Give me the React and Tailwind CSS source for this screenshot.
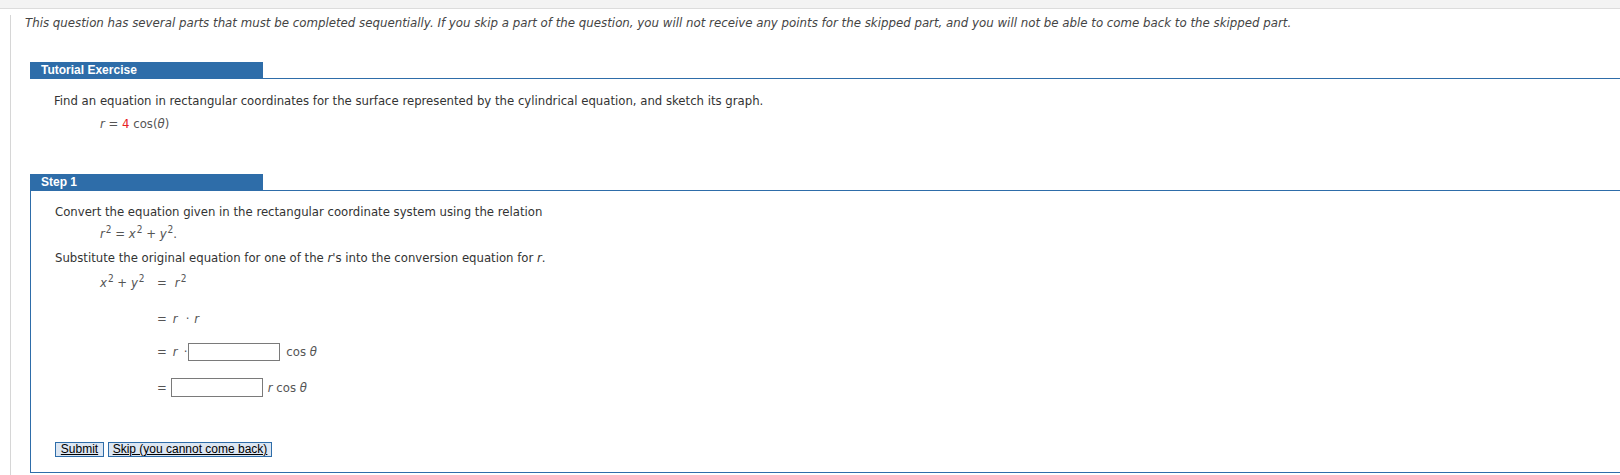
import React from "react";

const BLUE = "bg-[#2e6da9]";

const SectionHeader = ({ title }) => (
  <div className="flex items-end">
    <div className={`w-[233px] h-[17px] ${BLUE} pl-[11px] text-white font-bold text-[12px] leading-[17px] font-['Liberation_Sans',Arial,sans-serif]`}>
      {title}
    </div>
    <div className="flex-1 border-b border-[#2e6da9]" />
  </div>
);

const V = ({ children }) => <i className="italic">{children}</i>;
const Sq = () => <sup className="text-[10px] ml-[1px]">2</sup>;

export default function App() {
  return (
    <div className="w-[1620px] h-[475px] bg-white overflow-hidden text-[#333] font-['DejaVu_Sans_Condensed','DejaVu_Sans',sans-serif] text-[13px]">
      <div className="h-[9px] bg-[#f3f3f3] border-b border-[#dcdcdc]" />
      <div className="ml-[10px] border-l border-[#d6d6d6] h-[466px]">
        <p className="mt-[6px] pl-[14px] leading-[16px] italic text-[11.8px] text-[#444] font-['DejaVu_Sans',sans-serif]">
          This question has several parts that must be completed sequentially. If you skip a part of the question, you will not receive any points for the skipped part, and you will not be able to come back to the skipped part.
        </p>

        <div className="ml-[19px] mt-[31px]">
          <SectionHeader title="Tutorial Exercise" />
          <div className="pl-[24px]">
            <p className="mt-[14px] leading-[16px]">
              Find an equation in rectangular coordinates for the surface represented by the cylindrical equation, and sketch its graph.
            </p>
            <p className="mt-[7px] ml-[46px] leading-[16px] text-[#555]">
              <V>r</V> = <span className="text-[#e8231f]">4</span> cos(<V>θ</V>)
            </p>
          </div>
        </div>

        <div className="ml-[19px] mt-[42px]">
          <SectionHeader title="Step 1" />
          <div className="border-l border-b border-[#2e6da9] pl-[24px] pb-[15px]">
            <p className="pt-[13px] leading-[16px]">
              Convert the equation given in the rectangular coordinate system using the relation
            </p>
            <p className="mt-[6px] ml-[45px] leading-[16px] text-[#555]">
              <V>r</V><Sq /> = <V>x</V><Sq /> + <V>y</V><Sq />.
            </p>
            <p className="mt-[8px] leading-[16px]">
              Substitute the original equation for one of the <V>r</V>'s into the conversion equation for <V>r</V>.
            </p>

            <div className="ml-[45px] grid grid-cols-[57px_auto] justify-start text-[#555]">
              <div className="mt-[9px] leading-[16px]">
                <V>x</V><Sq /> + <V>y</V><Sq />
              </div>
              <div className="mt-[9px] leading-[16px]">
                <span>=</span>
                <span className="ml-[8px]"><V>r</V><Sq /></span>
              </div>

              <div />
              <div className="mt-[20px] leading-[16px] flex">
                <span>=</span>
                <span className="ml-[6px]"><V>r</V></span>
                <span className="ml-[8px]">·</span>
                <span className="ml-[5px]"><V>r</V></span>
              </div>

              <div />
              <div className="mt-[16px] h-[18px] flex items-center">
                <span>=</span>
                <span className="ml-[6px]"><V>r</V></span>
                <span className="ml-[6px]">·</span>
                <input type="text" className="ml-[1px] w-[92px] h-[18px] border border-[#7a7a7a] bg-white outline-none" />
                <span className="ml-[6px]">cos <V>θ</V></span>
              </div>

              <div />
              <div className="mt-[17px] h-[19px] flex items-center">
                <span>=</span>
                <input type="text" className="ml-[4px] w-[92px] h-[19px] border border-[#7a7a7a] bg-white outline-none" />
                <span className="ml-[5px]"><V>r</V> cos <V>θ</V></span>
              </div>
            </div>

            <div className="mt-[45px] flex gap-[4px] font-['Liberation_Sans',Arial,sans-serif] text-[12px] text-black">
              <button className="h-[15px] w-[49px] bg-[#dce6f2] border border-[#2e6da9] underline leading-[13px]">
                Submit
              </button>
              <button className="h-[15px] w-[164px] bg-[#dce6f2] border border-[#2e6da9] underline leading-[13px]">
                Skip (you cannot come back)
              </button>
            </div>
          </div>
        </div>
      </div>
    </div>
  );
}
